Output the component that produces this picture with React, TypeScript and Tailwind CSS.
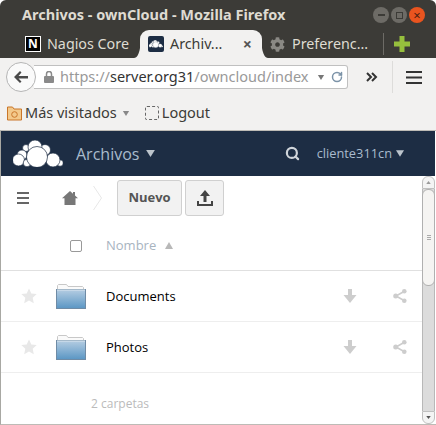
import { RotateCw, Search } from "lucide-react";
import { FaCog } from "react-icons/fa";

const Caret = ({ className }: { className: string }) => (
  <svg viewBox="0 0 10 8" className={className}>
    <path d="M0 0h10L5 8z" fill="currentColor" />
  </svg>
);

function OwnCloudLogo({ className }: { className: string }) {
  return (
    <svg viewBox="0 0 50 27" className={className}>
      <g fill="#fff" stroke="#1d2d44" strokeWidth="0.700">
        <circle cx="13" cy="8" r="3.500" />
        <circle cx="32" cy="10" r="5.500" />
        <circle cx="22" cy="7" r="7" />
        <circle cx="9" cy="15" r="5" />
        <circle cx="5.500" cy="20" r="6" />
        <circle cx="47" cy="23" r="3.300" />
        <circle cx="40" cy="20" r="7" />
        <circle cx="14" cy="23" r="3.800" />
        <circle cx="24" cy="17" r="10.500" />
      </g>
    </svg>
  );
}

function Folder() {
  return (
    <svg viewBox="0 0 30 25" className="h-[25px] w-[30px]">
      <defs>
        <linearGradient id="fg" x1="0" y1="0" x2="0" y2="1">
          <stop offset="0" stopColor="#b5cde2" />
          <stop offset="1" stopColor="#5a96c4" />
        </linearGradient>
      </defs>
      <path d="M1.500 6V1.500L2.500.5h8l1.500 2h14.500l1 1V6z" fill="#fafafa" stroke="#c8c8c8" />
      <rect x="0.500" y="5.500" width="29" height="19" fill="url(#fg)" stroke="#6f8ba5" />
      <path d="M1 6h28" stroke="#dbe6ef" />
    </svg>
  );
}

function FileRow({ name }: { name: string }) {
  return (
    <div className="flex h-[51px] items-center border-b border-[#eeeeee]">
      <svg viewBox="0 0 16 16" className="ml-[20px] h-[16px] w-[16px] text-[#e8e8e8]">
        <path d="M8 .5l2.300 5 5.400.6-4 3.700 1.100 5.400L8 12.500l-4.800 2.700 1.100-5.400-4-3.700 5.400-.6z" fill="currentColor" />
      </svg>
      <div className="ml-[19px] h-[25px] w-[30px]">
        <Folder />
      </div>
      <span className="ml-[20px] pt-[2px] text-[13px] text-black">{name}</span>
      <svg viewBox="0 0 14 14" className="ml-auto h-[14px] w-[14px] text-[#cdcdcd]">
        <path d="M5 0h4v6h4.500L7 14 .5 6H5z" fill="currentColor" />
      </svg>
      <svg viewBox="0 0 14 14" className="ml-[36px] mr-[15px] h-[14px] w-[14px] text-[#cdcdcd]">
        <path d="M11 2.500L3 7l8 4.500" fill="none" stroke="currentColor" strokeWidth="1.600" />
        <circle cx="11.300" cy="2.300" r="2.300" fill="currentColor" />
        <circle cx="2.700" cy="7" r="2.500" fill="currentColor" />
        <circle cx="11.300" cy="11.700" r="2.300" fill="currentColor" />
      </svg>
    </div>
  );
}

function Scrollbar() {
  return (
    <div className="flex w-[13px] shrink-0 flex-col bg-white">
      <div className="flex h-[13px] shrink-0 items-center justify-center rounded-t-[6px] border border-[#c0c0c0] bg-[#f4f4f4]">
        <svg viewBox="0 0 6 4" className="h-[3px] w-[5px] text-[#9a9a9a]"><path d="M3 0l3 4H0z" fill="currentColor" /></svg>
      </div>
      <div className="flex flex-1 flex-col border-x border-[#b8b8b8] bg-[#dcdcdc]">
        <div className="-mx-px flex h-[97px] flex-col items-center justify-center gap-[1px] rounded-[6px] border border-[#b0b0b0] bg-[#f5f4f2]">
          <div className="h-px w-[4px] bg-[#aaa]" />
          <div className="h-px w-[4px] bg-[#aaa]" />
          <div className="h-px w-[4px] bg-[#aaa]" />
        </div>
      </div>
      <div className="flex h-[13px] shrink-0 items-center justify-center rounded-b-[6px] border border-[#c0c0c0] bg-[#f4f4f4]">
        <svg viewBox="0 0 6 4" className="h-[3px] w-[5px] text-[#555]"><path d="M0 0h6L3 4z" fill="currentColor" /></svg>
      </div>
    </div>
  );
}

export default function App() {
  return (
    <div className="flex h-[425px] w-[436px] flex-col overflow-hidden bg-white font-['Noto_Sans',sans-serif]">
      {/* title bar */}
      <div className="flex h-[30px] shrink-0 items-center rounded-t-[6px] bg-[#3c3b37] pl-[22px] pr-[11px]">
        <span className="text-[14.500px] font-bold text-[#dfdbd2]">Archivos - ownCloud - Mozilla Firefox</span>
        <div className="ml-auto flex items-center gap-[2px]">
          <div className="flex h-[16px] w-[16px] items-center justify-center rounded-full bg-[#6d6b66]">
            <div className="h-[2px] w-[7px] bg-[#3c3b37]" />
          </div>
          <div className="flex h-[16px] w-[16px] items-center justify-center rounded-full bg-[#6d6b66]">
            <div className="h-[7px] w-[7px] border border-[#3c3b37]" />
          </div>
          <div className="flex h-[16px] w-[16px] items-center justify-center rounded-full bg-[#e9541f] text-[13px] leading-none text-[#4a2010]">×</div>
        </div>
      </div>

      {/* tabs */}
      <div className="flex h-[28px] shrink-0 items-center bg-[#3c3b37] pl-[25px] text-[14.300px] text-[#dfdbd2]">
        <div className="flex h-[16px] w-[16px] items-center justify-center border border-white bg-black text-[12px] font-bold leading-none text-white">N</div>
        <span className="ml-[6px] w-[86px]">Nagios Core</span>
        <div className="relative ml-[7px] flex h-[28px] w-[122px] items-center rounded-t-[9px] bg-[#f2f1f0] pl-[8px] text-[#3c3b37]">
          <svg viewBox="0 0 6 10" className="absolute -left-[6px] bottom-0 h-[10px] w-[6px]"><path d="M6 0v10H0C3 10 5 6 6 0z" fill="#f2f1f0" /></svg>
          <div className="flex h-[16px] w-[16px] items-center justify-center rounded-[2px] bg-[#1d2d44]">
            <OwnCloudLogo className="w-[14px]" />
          </div>
          <span className="ml-[6px]">Archiv...</span>
          <span className="ml-auto mr-[10px] text-[16px] font-bold leading-none text-[#555]">×</span>
          <svg viewBox="0 0 6 10" className="absolute -right-[6px] bottom-0 h-[10px] w-[6px]"><path d="M0 0v10h6C3 10 1 6 0 0z" fill="#f2f1f0" /></svg>
        </div>
        <FaCog size={15} className="ml-[8px] text-[#8a8984]" />
        <span className="ml-[7px] w-[81px]">Preferenc...</span>
        <div className="ml-[10px] h-[22px] w-px bg-[#6d6b66]" />
        <svg viewBox="0 0 16 16" className="ml-[10px] h-[16px] w-[16px]">
          <path d="M5.500 0h5v5.500H16v5h-5.500V16h-5v-5.500H0v-5h5.500z" fill="#96bf3d" />
        </svg>
      </div>

      {/* nav bar */}
      <div className="flex h-[38px] shrink-0 items-center bg-[#f2f1f0] pl-[6px]">
        <div className="z-10 flex h-[30px] w-[30px] items-center justify-center rounded-full border border-[#b5b5b5] bg-[#fafafa]">
          <svg viewBox="0 0 14 12" className="h-[12px] w-[14px] text-[#4a4a4a]">
            <path d="M6 0l1.500 1.500L4.500 5H14v2.500H4.500l3 3L6 12 0 6z" fill="currentColor" />
          </svg>
        </div>
        <div className="-ml-[2px] flex h-[24px] w-[314px] items-center rounded-r-[3px] border border-l-0 border-[#c0c0c0] bg-white pl-[10px] pr-[4px] text-[14.500px] text-[#999]">
          <svg viewBox="0 0 10 12" className="h-[12px] w-[10px] text-[#8a8a8a]">
            <path d="M2.500 5V3a2.500 2.500 0 0 1 5 0v2" fill="none" stroke="currentColor" strokeWidth="1.500" />
            <rect y="5" width="10" height="7" rx="1" fill="currentColor" />
          </svg>
          <span className="ml-[6px]">https://<span className="text-[#333]">server.org31</span>/owncloud/index</span>
          <Caret className="ml-auto h-[5px] w-[8px] text-[#777]" />
          <RotateCw size={12} strokeWidth={3} className="ml-[6px] text-[#7c93a8]" />
        </div>
        <svg viewBox="0 0 12 10" className="ml-[18px] h-[10px] w-[12px] text-[#333]">
          <path d="M1 1l4 4-4 4M6 1l4 4-4 4" fill="none" stroke="currentColor" strokeWidth="2" />
        </svg>
        <div className="ml-[14px] h-[32px] w-px bg-[#dddcda]" />
        <svg viewBox="0 0 16 13" className="ml-[13px] h-[13px] w-[16px] text-[#333]">
          <path d="M0 0h16v2H0zM0 5.500h16v2H0zM0 11h16v2H0z" fill="currentColor" />
        </svg>
      </div>

      {/* bookmarks */}
      <div className="flex h-[34px] shrink-0 items-center bg-[#f2f1f0] pl-[7px] text-[14.500px] text-[#3c3b37]">
        <svg viewBox="0 0 15 15" className="h-[15px] w-[15px]">
          <path d="M.5 14V1h5l1.500 2h7.500v11z" fill="#f3c98b" stroke="#c9762a" />
          <circle cx="7.500" cy="8.500" r="2.800" fill="none" stroke="#c9762a" />
        </svg>
        <span className="ml-[3px]">Más visitados</span>
        <Caret className="ml-[5px] h-[5px] w-[8px] text-[#888]" />
        <div className="ml-[15px] h-[14px] w-[14px] rounded-[2px] border border-dashed border-[#666]" />
        <span className="ml-[3px]">Logout</span>
      </div>

      {/* page */}
      <div className="flex min-h-0 flex-1 flex-col border-y border-l border-y-[#bdbbb6] border-l-[#a8a8a3] pr-[1px] font-['Open_Sans',sans-serif]">
        <div className="flex h-[45px] shrink-0 items-center bg-[#1d2d44] text-[#a9bbcd]">
          <OwnCloudLogo className="ml-[12px] w-[50px]" />
          <span className="ml-[13px] text-[16px]">Archivos</span>
          <Caret className="ml-[7px] h-[7px] w-[9px] text-[#bcc4cc]" />
          <Search size={15} strokeWidth={3.500} className="ml-auto text-[#cfd4da]" />
          <span className="ml-[17px] text-[12.800px]">cliente311cn</span>
          <Caret className="ml-[4px] mr-[31px] h-[7px] w-[8px] text-[#bcc4cc]" />
        </div>

        <div className="flex min-h-0 flex-1">
          <div className="min-w-0 flex-1">
            {/* toolbar */}
            <div className="flex h-[45px] items-center pb-[1px]">
              <svg viewBox="0 0 12 12" className="ml-[16px] h-[12px] w-[12px] text-[#666]">
                <path d="M0 0h12v2H0zM0 5h12v2H0zM0 10h12v2H0z" fill="currentColor" />
              </svg>
              <svg viewBox="0 0 16 14" className="ml-[33px] h-[14px] w-[16px] text-[#777]">
                <path d="M8 0l3 2.700V1h2v3.500L16 7.200h-2.500V14h-11V7.200H0z" fill="currentColor" />
              </svg>
              <svg viewBox="0 0 9 24" className="ml-[15px] h-[24px] w-[9px] text-[#e8e8e8]">
                <path d="M.5 0l8 12-8 12" fill="none" stroke="currentColor" />
              </svg>
              <button className="ml-[15px] flex h-[36px] w-[65px] items-center justify-center rounded-[3px] border border-[#d0d0d0] bg-[#f2f2f2] text-[13px] font-bold text-[#555]">Nuevo</button>
              <button className="ml-[3px] flex h-[36px] w-[39px] items-center justify-center rounded-[3px] border border-[#d0d0d0] bg-[#f2f2f2]">
                <svg viewBox="0 0 16 16" className="h-[16px] w-[16px] text-[#444]">
                  <path d="M8 0l5 6H9.500v6h-3V6H3zM0 11h2v3h12v-3h2v5H0z" fill="currentColor" />
                </svg>
              </button>
            </div>
            {/* column header */}
            <div className="flex h-[50px] items-center border-b border-[#e0e0e0]">
              <div className="ml-[69px] h-[12px] w-[12px] rounded-[2px] border border-[#999] bg-white" />
              <span className="ml-[24px] text-[13px] text-[#a8b4bf]">Nombre</span>
              <svg viewBox="0 0 8 7" className="ml-[9px] h-[7px] w-[8px] text-[#b8b8b8]"><path d="M4 0l4 7H0z" fill="currentColor" /></svg>
            </div>
            <FileRow name="Documents" />
            <FileRow name="Photos" />
            <div className="ml-[90px] mt-[22px] text-[12px] text-[#bbbbbb]">2 carpetas</div>
          </div>
          <Scrollbar />
        </div>
      </div>
    </div>
  );
}
